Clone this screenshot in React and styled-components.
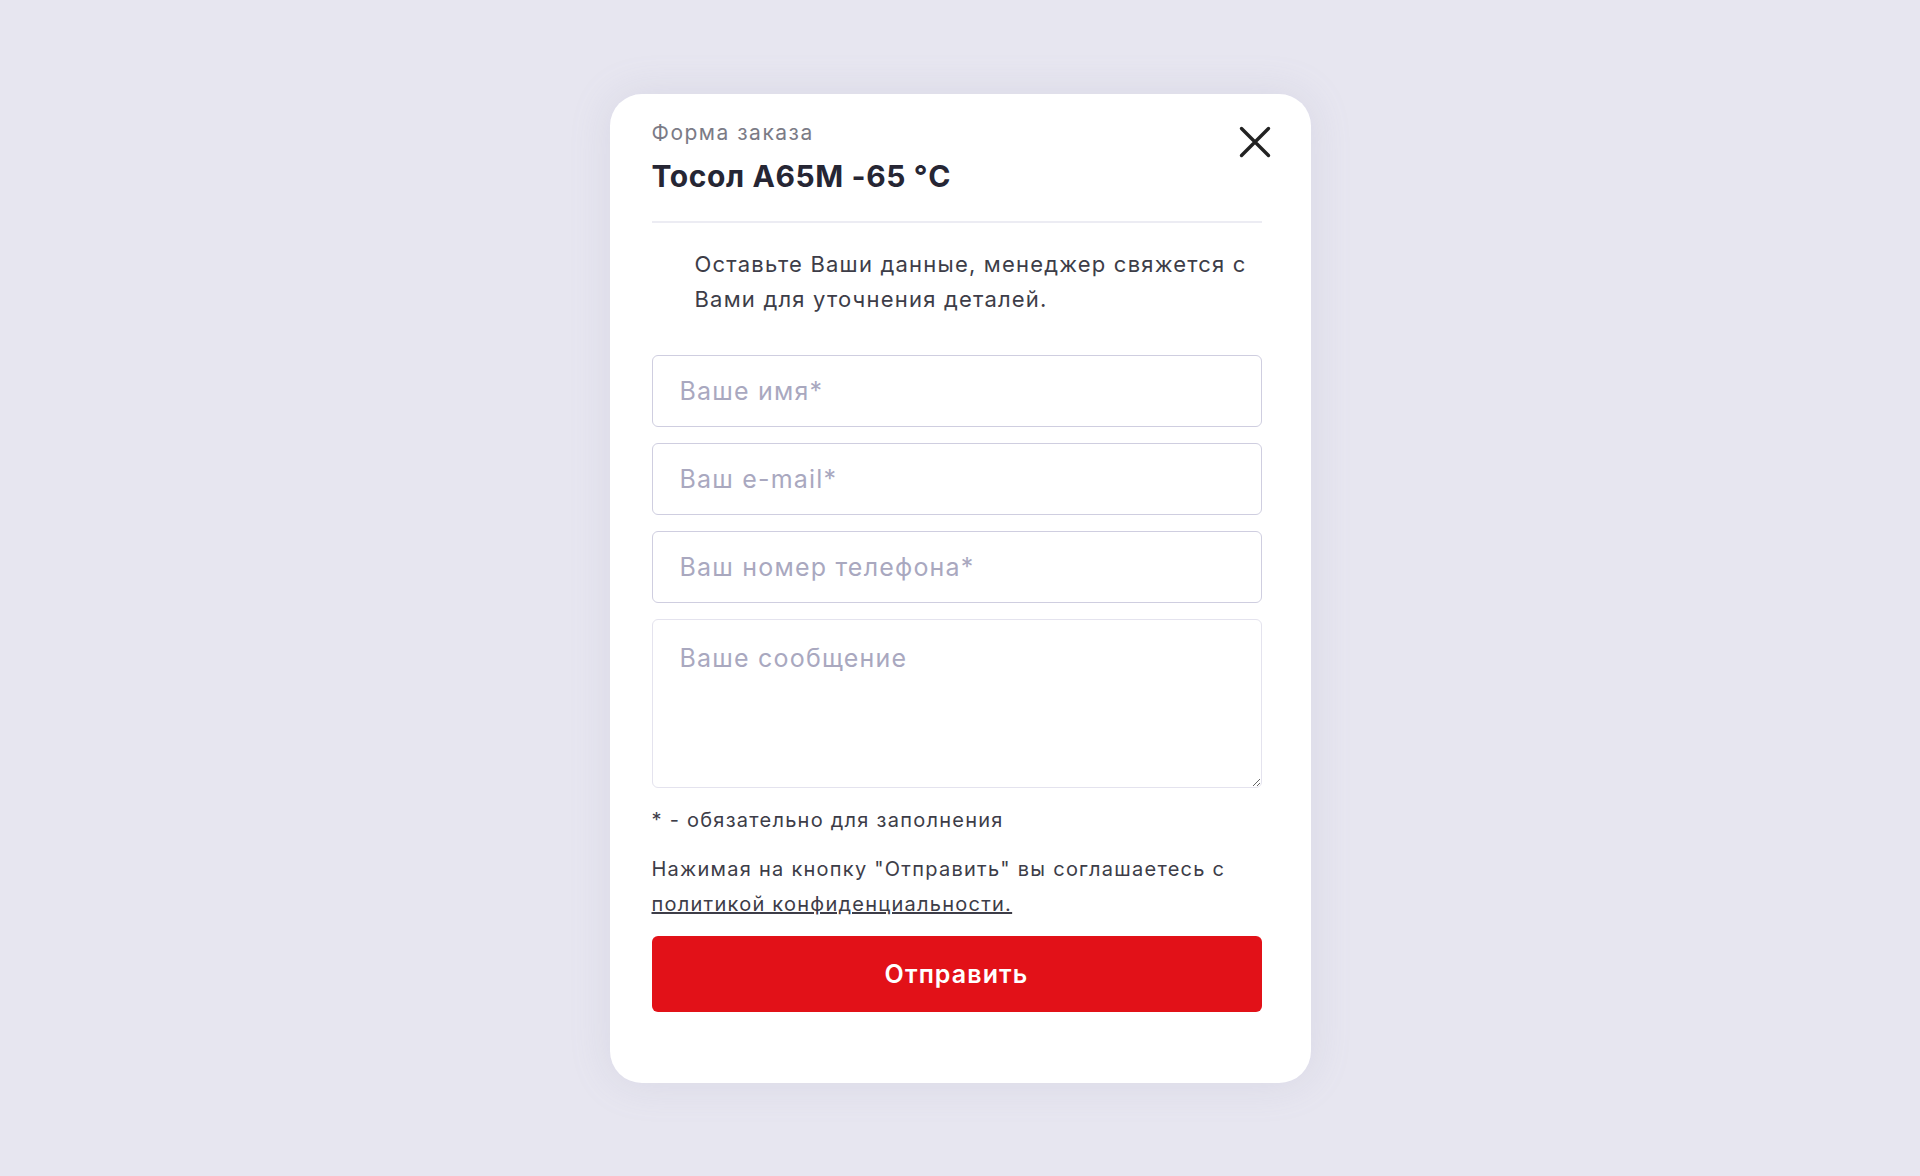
import React from 'react'
import styled, { createGlobalStyle } from 'styled-components'

const GlobalStyle = createGlobalStyle`
  html, body {
    margin: 0;
    padding: 0;
    background: #e7e6f0;
    font-family: Inter, "Noto Sans", sans-serif;
  }
  * { box-sizing: border-box; }
`

// Styles
const Page = styled.div`
  min-height: 100vh;
  display: flex;
  align-items: center;
  justify-content: center;
`

const Modal = styled.div`
  width: 701px;
  padding: 26px 49px 71px 42px;
  border-radius: 32px;
  background: #fff;
  box-shadow: 0 0 40px rgba(150, 148, 180, 0.18);
`

const Header = styled.div`
  display: flex;
  justify-content: space-between;
  align-items: flex-start;
  padding-bottom: 27px;
  border-bottom: 2px solid #ececf3;
`

const Label = styled.div`
  font-size: 21px;
  line-height: 26px;
  letter-spacing: 1.5px;
  color: #7b7b86;
`

const Title = styled.h2`
  margin: 12px 0 0;
  font-size: 30px;
  line-height: 36px;
  letter-spacing: 0.6px;
  font-weight: 700;
  color: #262634;
`

const CloseButton = styled.button`
  margin: 6px -9px 0 0;
  padding: 0;
  width: 32px;
  height: 32px;
  border: none;
  background: none;
  cursor: pointer;
  color: #222;
`

const Intro = styled.p`
  margin: 24px 0 0 43px;
  font-size: 22px;
  line-height: 35px;
  letter-spacing: 1.2px;
  color: #3d3d48;
`

const Fields = styled.form`
  display: flex;
  flex-direction: column;
  gap: 16px;
  margin-top: 38px;
`

const fieldStyles = `
  width: 100%;
  border: 1.5px solid #cfcee0;
  border-radius: 6px;
  padding: 0 27px;
  font-family: Inter, "Noto Sans", sans-serif;
  font-size: 25px;
  letter-spacing: 1.2px;
  color: #333;
  background: #fff;
  outline: none;
  &::placeholder { color: #a9a8bf; }
`

const Input = styled.input`
  ${fieldStyles}
  height: 72px;
`

const TextArea = styled.textarea`
  ${fieldStyles}
  height: 169px;
  padding-top: 23px;
  line-height: 30px;
  border-color: #e4e3ee;
  resize: vertical;
`

const Note = styled.div`
  margin-top: ${(p) => p.$top}px;
  font-size: 20px;
  line-height: ${(p) => p.$lh}px;
  letter-spacing: 1.25px;
  color: #3d3d48;
`

const PolicyLink = styled.a`
  color: #3d3d48;
  text-decoration: underline;
`

const Submit = styled.button`
  margin-top: 14px;
  width: 100%;
  height: 76px;
  border: none;
  border-radius: 6px;
  background: #e21118;
  color: #fff;
  font-family: Inter, "Noto Sans", sans-serif;
  font-size: 25px;
  letter-spacing: 1.1px;
  font-weight: 600;
  cursor: pointer;
`

const CloseIcon = () => (
  <svg width="32" height="32" viewBox="0 0 32 32" fill="none" stroke="currentColor" strokeWidth="3.4" strokeLinecap="round">
    <path d="M2.5 2.5 L29.5 29.5 M29.5 2.5 L2.5 29.5" />
  </svg>
)

const App = () => {
  return (
    <Page>
      <GlobalStyle />
      <Modal>
        <Header>
          <div>
            <Label>Форма заказа</Label>
            <Title>Тосол А65М -65 °C</Title>
          </div>
          <CloseButton aria-label="Закрыть">
            <CloseIcon />
          </CloseButton>
        </Header>
        <Intro>
          Оставьте Ваши данные, менеджер свяжется с<br />
          Вами для уточнения деталей.
        </Intro>
        <Fields onSubmit={(e) => e.preventDefault()}>
          <Input placeholder="Ваше имя*" />
          <Input placeholder="Ваш e-mail*" />
          <Input placeholder="Ваш номер телефона*" />
          <TextArea placeholder="Ваше сообщение" />
        </Fields>
        <Note $top={20} $lh={24}>* - обязательно для заполнения</Note>
        <Note $top={20} $lh={35}>
          Нажимая на кнопку "Отправить" вы соглашаетесь с<br />
          <PolicyLink href="#">политикой конфиденциальности.</PolicyLink>
        </Note>
        <Submit type="submit">Отправить</Submit>
      </Modal>
    </Page>
  )
}

export default App
